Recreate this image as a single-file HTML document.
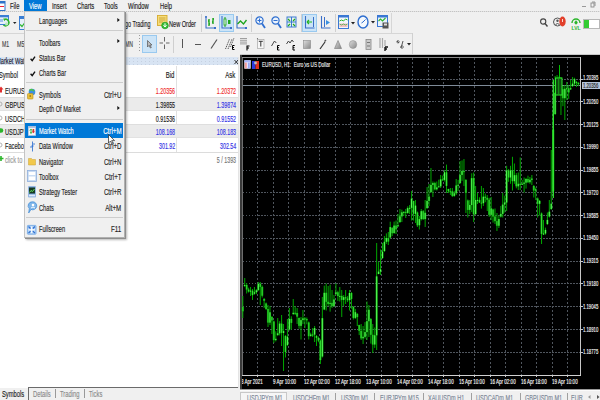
<!DOCTYPE html><html><head><meta charset="utf-8"><style>
*{margin:0;padding:0;box-sizing:border-box}
html,body{width:600px;height:400px;overflow:hidden;background:#f0f0f0;font-family:"Liberation Sans",sans-serif}
.b{position:absolute}
.t{position:absolute;white-space:nowrap;line-height:1;transform-origin:0 50%;-webkit-text-stroke:0.15px currentColor}
.t.r{transform-origin:100% 50%}
svg{position:absolute;overflow:visible}
</style></head><body>
<div class="b" style="left:0px;top:0px;width:600px;height:12px;background:#f0f0f0"></div><div class="b" style="left:0px;top:11.3px;width:600px;height:1px;background:repeating-linear-gradient(90deg,#c4c4c4 0 1px,#e2e2e2 1px 2px)"></div><svg style="left:0px;top:1px" width="6" height="10" viewBox="0 0 6 10"><rect x="-2" y="0.5" width="7" height="9" fill="#fff" stroke="#2f73c9"/><rect x="-2" y="0.5" width="7" height="2" fill="#2f73c9"/><rect x="0" y="5" width="4" height="1" fill="#e23"/></svg><span class="t" style="left:9.6px;top:1.6px;font-size:8.6px;color:#1a1a1a;transform:scaleX(0.68);">File</span><span class="t" style="left:52px;top:1.6px;font-size:8.6px;color:#1a1a1a;transform:scaleX(0.68);">Insert</span><span class="t" style="left:77px;top:1.6px;font-size:8.6px;color:#1a1a1a;transform:scaleX(0.68);">Charts</span><span class="t" style="left:104px;top:1.6px;font-size:8.6px;color:#1a1a1a;transform:scaleX(0.68);">Tools</span><span class="t" style="left:127.8px;top:1.6px;font-size:8.6px;color:#1a1a1a;transform:scaleX(0.68);">Window</span><span class="t" style="left:159.6px;top:1.6px;font-size:8.6px;color:#1a1a1a;transform:scaleX(0.68);">Help</span><div class="b" style="left:24px;top:0px;width:23px;height:11px;background:#0078d7"></div><span class="t" style="left:28.8px;top:1.6px;font-size:8.4px;color:#fff;transform:scaleX(0.7);">View</span><div class="b" style="left:582px;top:6px;width:4px;height:1px;background:#999"></div><svg style="left:590px;top:1px" width="6" height="7" viewBox="0 0 6 7"><rect x="1" y="2" width="3" height="4" fill="none" stroke="#8a8a8a" stroke-width="0.9"/><path d="M2 1h3v4" fill="none" stroke="#8a8a8a" stroke-width="0.9"/></svg><div class="b" style="left:0px;top:12.5px;width:600px;height:41px;background:#f0f0f0"></div><div class="b" style="left:0px;top:32.8px;width:413px;height:1px;background:#d6d6d6"></div><div class="b" style="left:0px;top:53.5px;width:600px;height:1px;background:#c9c9c9"></div><svg style="left:0px;top:15px" width="11" height="15" viewBox="0 0 11 15"><rect x="-1.5" y="0.5" width="10" height="9" fill="#e6effa" stroke="#3a7fd5"/><rect x="-1.5" y="0.5" width="10" height="1.8" fill="#3a7fd5"/><rect x="0" y="4" width="3" height="3" fill="#9cc0ec"/><path d="M4.2 4.5a3.3 3.3 0 1 1 -0.8 5.5" fill="none" stroke="#2db52d" stroke-width="1.5"/><path d="M3 3.5l2.5 0.5-1 2.2z" fill="#2db52d"/><circle cx="6.6" cy="8.8" r="1.6" fill="#bde6bd"/></svg><svg style="left:12.5px;top:22px" width="4" height="3" viewBox="0 0 4 3"><path d="M0 0h3.5l-1.75 2z" fill="#222"/></svg><svg style="left:19px;top:16px" width="6" height="14" viewBox="0 0 6 14"><rect x="0.5" y="0.5" width="6" height="13" fill="#e6effa" stroke="#3a7fd5"/><rect x="0.5" y="0.5" width="6" height="2.5" fill="#3a7fd5"/><path d="M1.2 8.5l1.8 2 2.5-3.5" stroke="#2db52d" fill="none" stroke-width="1.2"/></svg><span class="t" style="left:125.2px;top:19.6px;font-size:9px;color:#1a1a1a;transform:scaleX(0.6);">go Trading</span><svg style="left:157px;top:15px" width="11" height="15" viewBox="0 0 11 15"><rect x="0.5" y="0.5" width="9.5" height="10" fill="#f6dc7a" stroke="#d6ac30" stroke-width="0.9"/><path d="M2 3h6.5M2 5h6.5M2 7h4" stroke="#c49a2a" stroke-width="0.8"/><circle cx="8" cy="10.5" r="3.3" fill="#3cc03c" stroke="#1f9a1f" stroke-width="0.7"/><path d="M8 8.3v3.5M6.5 10.3l1.5 1.7 1.5-1.7" stroke="#fff" fill="none" stroke-width="1"/></svg><span class="t" style="left:168.8px;top:19.6px;font-size:9px;color:#1a1a1a;transform:scaleX(0.62);">New Order</span><div class="b" style="left:201px;top:14px;width:1px;height:18px;background:#cfcfcf"></div><div class="b" style="left:251px;top:14px;width:1px;height:18px;background:#cfcfcf"></div><div class="b" style="left:301px;top:14px;width:1px;height:18px;background:#cfcfcf"></div><div class="b" style="left:335px;top:14px;width:1px;height:18px;background:#cfcfcf"></div><div class="b" style="left:391px;top:13px;width:1px;height:20px;background:#d6d6d6"></div><svg style="left:205px;top:16px" width="11" height="13" viewBox="0 0 11 13"><path d="M1 0v12h10" stroke="#3a6fc8" fill="none" stroke-width="1.1"/><circle cx="1" cy="1" r="0.9" fill="#3a6fc8"/><rect x="9" y="11" width="2" height="2" fill="#3a6fc8"/><path d="M4 3v7M3 5h1M4 8h1M8 2v6M7 6h1M8 3h1" stroke="#1ea51e" stroke-width="1.4"/></svg><div class="b" style="left:219px;top:14px;width:15px;height:18px;background:#cce4f7;border:1px solid #99c9ef"></div><svg style="left:221px;top:16px" width="11" height="13" viewBox="0 0 11 13"><path d="M1 0v12h10" stroke="#3a6fc8" fill="none" stroke-width="1.1"/><rect x="9" y="11" width="2" height="2" fill="#3a6fc8"/><path d="M4 1v10" stroke="#1ea51e" stroke-width="1"/><rect x="3" y="3" width="2" height="6" fill="#e8f6e8" stroke="#1ea51e" stroke-width="0.8"/><rect x="7" y="4" width="2.5" height="4" fill="#1ea51e"/></svg><svg style="left:236px;top:16px" width="11" height="13" viewBox="0 0 11 13"><path d="M1 0v12h10" stroke="#3a6fc8" fill="none" stroke-width="1.1"/><rect x="9" y="11" width="2" height="2" fill="#3a6fc8"/><path d="M1.5 8l3-3 3 3 3-4" stroke="#1ea51e" fill="none" stroke-width="1.3"/></svg><svg style="left:255px;top:16px" width="11" height="13" viewBox="0 0 11 13"><circle cx="4.5" cy="4.5" r="3.6" fill="#eaf2fc" stroke="#2f6fd0" stroke-width="1.2"/><path d="M7 7.5l3 4.5" stroke="#2f6fd0" stroke-width="1.8"/><path d="M2.5 4.5h4" stroke="#2f6fd0" stroke-width="1"/><path d="M4.5 2.5v4" stroke="#2f6fd0" stroke-width="1"/></svg><svg style="left:271px;top:16px" width="11" height="13" viewBox="0 0 11 13"><circle cx="4.5" cy="4.5" r="3.6" fill="#eaf2fc" stroke="#2f6fd0" stroke-width="1.2"/><path d="M7 7.5l3 4.5" stroke="#2f6fd0" stroke-width="1.8"/><path d="M2.5 4.5h4" stroke="#2f6fd0" stroke-width="1"/></svg><svg style="left:286px;top:16px" width="11" height="12" viewBox="0 0 11 12"><rect x="0.5" y="0.5" width="10" height="11" fill="#3a78d4"/><rect x="1.5" y="1.5" width="3.5" height="4" fill="#e8f3e8"/><rect x="6" y="1.5" width="3.5" height="4" fill="#e8f3e8"/><rect x="1.5" y="6.5" width="3.5" height="4" fill="#e8f3e8"/><rect x="6" y="6.5" width="3.5" height="4" fill="#e8f3e8"/><path d="M2 3l2 2M9 3l-2 2M2 10l2-2M9 10l-2-2" stroke="#1ea51e" stroke-width="1.1"/></svg><div class="b" style="left:302px;top:14px;width:15px;height:18px;background:#cce4f7;border:1px solid #99c9ef"></div><svg style="left:304px;top:16px" width="11" height="13" viewBox="0 0 11 13"><path d="M1.5 0v12h9" stroke="#3a6fc8" fill="none" stroke-width="1.1"/><path d="M9.5 1v10" stroke="#3a6fc8" stroke-width="1"/><path d="M3 6h5M3 6l2-2M3 6l2 2" stroke="#25b525" stroke-width="1.2" fill="none"/></svg><svg style="left:320px;top:16px" width="11" height="13" viewBox="0 0 11 13"><path d="M1.5 0v12h9" stroke="#3a6fc8" fill="none" stroke-width="1.1"/><path d="M4.5 1v10" stroke="#3a6fc8" stroke-width="1"/><path d="M6 4l4 2.5-4 2.5z" fill="#3a8fe0"/></svg><svg style="left:338px;top:15px" width="11" height="14" viewBox="0 0 11 14"><rect x="0.5" y="0.5" width="10" height="13" fill="#f2f6fb" stroke="#3a78d4"/><rect x="0.5" y="0.5" width="10" height="2" fill="#3a78d4"/><path d="M1.5 6l2-1 2 1 2-2 2 1" stroke="#2db52d" fill="none" stroke-width="1"/><rect x="1.5" y="8.5" width="8" height="3.5" fill="#f0c0c0"/><path d="M1.5 9l2 1 2-1 2 1 2-1" stroke="#4cae4c" fill="none" stroke-width="0.8"/></svg><svg style="left:350.5px;top:21.5px" width="4" height="3" viewBox="0 0 4 3"><path d="M0 0h4l-2 2.5z" fill="#222"/></svg><svg style="left:357px;top:15px" width="12" height="14" viewBox="0 0 12 14"><ellipse cx="6" cy="7" rx="5" ry="6" fill="#f4f8fd" stroke="#2f6fd0" stroke-width="1.4"/><path d="M6 7l2.5-2.5M6 7l-1.5 1" stroke="#2f6fd0" stroke-width="1"/></svg><svg style="left:371px;top:21px" width="4" height="3" viewBox="0 0 4 3"><path d="M0 0h4l-2 2.5z" fill="#222"/></svg><svg style="left:377px;top:15px" width="12" height="15" viewBox="0 0 12 15"><rect x="0.5" y="0.5" width="10" height="11" fill="#e8f1fb" stroke="#3a78d4"/><rect x="0.5" y="0.5" width="10" height="2" fill="#3a78d4"/><path d="M1.5 6l2-2 2 2 3-3" stroke="#2db52d" fill="none" stroke-width="1.1"/><rect x="5.5" y="7.5" width="6" height="6" fill="#555"/><rect x="7" y="8.5" width="3" height="2" fill="#ddd"/></svg><svg style="left:540px;top:18px" width="8" height="10" viewBox="0 0 8 10"><circle cx="3.2" cy="3.5" r="2.6" fill="none" stroke="#444" stroke-width="1.1"/><path d="M5 5.5l2.5 3" stroke="#444" stroke-width="1.4"/></svg><svg style="left:553px;top:16px" width="14" height="12" viewBox="0 0 14 12"><circle cx="4.5" cy="6" r="4" fill="#f0f0f0" stroke="#555" stroke-width="1"/><circle cx="4.5" cy="4.8" r="1.2" fill="#555"/><path d="M2.5 8.5q2-2 4 0" stroke="#555" fill="none"/><ellipse cx="9.5" cy="5.5" rx="3.2" ry="5" fill="#e2402b"/><path d="M9.5 3v3" stroke="#fff" stroke-width="0.8"/></svg><svg style="left:570px;top:16px" width="12" height="15" viewBox="0 0 12 15"><path d="M2 7a4 4 0 0 1 8 0" stroke="#2bb52b" fill="none" stroke-width="1.4"/><circle cx="6" cy="6.5" r="1.6" fill="#2bb52b"/><path d="M6 4.5v4" stroke="#2bb52b" stroke-width="1"/><text x="6" y="13.5" font-size="5" fill="#2bb52b" text-anchor="middle" font-family="Liberation Sans" font-weight="bold">LVL</text></svg><div class="b" style="left:583px;top:19px;width:17px;height:10px;background:#fff;border:1px solid #b8b8b8"></div><div class="b" style="left:584px;top:20px;width:5px;height:8px;background:#33cc33"></div><span class="t" style="left:2px;top:39.9px;font-size:8.6px;color:#444;transform:scaleX(0.6);">M1</span><span class="t" style="left:16.5px;top:39.9px;font-size:8.6px;color:#444;transform:scaleX(0.62);">M5</span><span class="t" style="left:125px;top:39.9px;font-size:8.6px;color:#444;transform:scaleX(0.6);">MN</span><div class="b" style="left:139px;top:35px;width:1px;height:18px;background:repeating-linear-gradient(180deg,#9a9a9a 0 1px,transparent 1px 3px)"></div><div class="b" style="left:142px;top:35px;width:15px;height:18px;background:#cce4f7;border:1px solid #99c9ef"></div><svg style="left:146.5px;top:39.5px" width="5" height="9" viewBox="0 0 5 9"><path d="M0.5 0.5v6.5l1.6-1.6 1.3 2.6 0.9-0.4-1.3-2.6h2z" fill="#bbb" stroke="#555" stroke-width="0.7"/></svg><svg style="left:159px;top:37px" width="11" height="12" viewBox="0 0 11 12"><path d="M5.5 0v4.5M5.5 7.5v4.5M0.5 6h3.5M7 6h3.5" stroke="#666" stroke-width="1"/></svg><div class="b" style="left:173px;top:36px;width:1px;height:17px;background:#cfcfcf"></div><div class="b" style="left:181.5px;top:39px;width:1.2px;height:9px;background:#555"></div><div class="b" style="left:195px;top:43.5px;width:6px;height:1.3px;background:#555"></div><svg style="left:210px;top:39px" width="8" height="10" viewBox="0 0 8 10"><path d="M7 0.5l-6 9" stroke="#555" stroke-width="1.2"/></svg><svg style="left:225px;top:37px" width="11" height="14" viewBox="0 0 11 14"><path d="M0.5 12l4-10M3 12l4-10M5.5 10l3.5-9" stroke="#333" stroke-width="0.8" stroke-dasharray="1.3 0.7"/><path d="M9.5 8.5h-2v4h2M7.5 10.5h1.5" stroke="#000" stroke-width="1" fill="none"/></svg><svg style="left:240px;top:37px" width="10" height="14" viewBox="0 0 10 14"><path d="M0 1.5h7M0 3.3h7M0 5.1h7M0 6.9h7" stroke="#8a8a8a" stroke-width="0.8"/><path d="M9.5 9h-2.5v4.5M7 11h2" stroke="#000" stroke-width="1.1" fill="none"/></svg><svg style="left:256px;top:37px" width="9" height="13" viewBox="0 0 9 13"><circle cx="1.5" cy="1.5" r="0.6" fill="#666"/><rect x="1.5" y="2.5" width="6.5" height="9" fill="#f6f6f6" stroke="#999" stroke-width="0.6"/><path d="M2.8 4.3h4M4.8 4.3v5.2" stroke="#333" stroke-width="1"/></svg><svg style="left:271px;top:38px" width="10" height="13" viewBox="0 0 10 13"><path d="M0.5 8l3-5 1.8 2" stroke="#444" stroke-width="1" fill="none"/><path d="M8.5 7.5h-2v4.5h2M6.5 9.7h1.5" stroke="#000" stroke-width="1" fill="none"/></svg><svg style="left:286px;top:38px" width="10" height="13" viewBox="0 0 10 13"><path d="M0.5 6l2-3 1.5 2 2-3 1.5 2" stroke="#444" stroke-width="1" fill="none"/><path d="M9 7.5h-2v4.5h2M7 9.7h1.5" stroke="#000" stroke-width="1" fill="none"/></svg><svg style="left:303px;top:40px" width="8" height="9" viewBox="0 0 8 9"><defs><linearGradient id="g1" x1="0" y1="0" x2="1" y2="1"><stop offset="0" stop-color="#ddd"/><stop offset="1" stop-color="#888"/></linearGradient></defs><rect x="0.5" y="0.5" width="7" height="8" fill="url(#g1)" stroke="#888" stroke-width="0.6"/></svg><svg style="left:319px;top:39px" width="8" height="11" viewBox="0 0 8 11"><path d="M1 10l5-7" stroke="#333" stroke-width="1.2"/><path d="M5 2l1.5-1.5 1 1L6 3z" fill="#555"/></svg><svg style="left:334px;top:40px" width="8" height="9" viewBox="0 0 8 9"><path d="M4 0.5l3.5 8h-7z" fill="url(#g1)" stroke="#777" stroke-width="0.6"/></svg><svg style="left:349px;top:40px" width="8" height="9" viewBox="0 0 8 9"><ellipse cx="4" cy="4.5" rx="3.7" ry="4" fill="url(#g1)" stroke="#888" stroke-width="0.5"/></svg><svg style="left:365px;top:39px" width="7" height="11" viewBox="0 0 7 11"><rect x="1" y="0.5" width="5" height="10" fill="#ccc" stroke="#888" stroke-width="0.8"/><path d="M2 3.5h3M2 7h3" stroke="#777"/></svg><svg style="left:379px;top:38px" width="9" height="13" viewBox="0 0 9 13"><path d="M1 0v10M3.5 0v10M6 2v6" stroke="#aaa" stroke-width="1.2"/><path d="M6 9h3M6 9v4M6 11h2" stroke="#111" stroke-width="1.4"/></svg><svg style="left:396px;top:40px" width="8" height="9" viewBox="0 0 8 9"><path d="M1 1l2 2M5 8l2-7" stroke="#555" stroke-width="1"/><circle cx="2" cy="1.8" r="1.2" fill="none" stroke="#555" stroke-width="0.8"/><circle cx="6" cy="7" r="1.3" fill="none" stroke="#555" stroke-width="0.8"/></svg><svg style="left:407px;top:43px" width="4" height="3" viewBox="0 0 4 3"><path d="M0 0h4l-2 2.5z" fill="#222"/></svg><div class="b" style="left:412px;top:33px;width:1px;height:21px;background:#d0d0d0"></div><div class="b" style="left:0px;top:54px;width:240px;height:346px;background:#f0f0f0"></div><div class="b" style="left:0px;top:56.5px;width:238px;height:331px;background:#fff"></div><div class="b" style="left:0px;top:57px;width:238px;height:8.3px;background-color:#d8e4f3;background-image:radial-gradient(circle at 1.5px 1.5px,#c6d1e1 0.5px,transparent 0.8px);background-size:4px 3px;background-position:0 0"></div><span class="t" style="left:-4.5px;top:57.2px;font-size:8.4px;color:#1a1a30;transform:scaleX(0.68);">Market Watch</span><svg style="left:233.5px;top:58.5px" width="5" height="6" viewBox="0 0 5 6"><path d="M0.5 1l3.5 4M4 1l-3.5 4" stroke="#222" stroke-width="0.9"/></svg><div class="b" style="left:237.5px;top:56.5px;width:1px;height:331px;background:#e4e4e4"></div><span class="t" style="left:-1px;top:71.2px;font-size:8.6px;color:#222;transform:scaleX(0.66);">Symbol</span><span class="t r" style="right:425.6px;top:71.2px;font-size:8.6px;color:#222;transform:scaleX(0.7);">Bid</span><span class="t r" style="right:364.5px;top:71.2px;font-size:8.6px;color:#222;transform:scaleX(0.7);">Ask</span><div class="b" style="left:175.8px;top:66px;width:1px;height:86px;background:#e0e0e0"></div><div class="b" style="left:0px;top:151.8px;width:238px;height:1px;background:#dcdcdc"></div><svg style="left:-1px;top:86.0px" width="5" height="7" viewBox="0 0 5 7"><path d="M2 0.5l2.5 3h-1.5v3h-2v-3h-1.5z" fill="#e03030"/></svg><span class="t" style="left:5px;top:87.0px;font-size:8.6px;color:#222;transform:scaleX(0.66);">EURUS</span><span class="t r" style="right:424.7px;top:87.0px;font-size:8.6px;color:#f03030;transform:scaleX(0.62);">1.20356</span><span class="t r" style="right:363.5px;top:87.0px;font-size:8.6px;color:#f03030;transform:scaleX(0.62);">1.20372</span><div class="b" style="left:0px;top:96.75px;width:238px;height:13.75px;background:#ebebeb;border-top:1px solid #dedede;border-bottom:1px solid #e2e2e2"></div><svg style="left:-2px;top:100.75px" width="5" height="6" viewBox="0 0 5 6"><circle cx="2" cy="3" r="2" fill="none" stroke="#aaa" stroke-width="0.9"/></svg><span class="t" style="left:5px;top:100.75px;font-size:8.6px;color:#222;transform:scaleX(0.66);">GBPUS</span><span class="t r" style="right:424.7px;top:100.75px;font-size:8.6px;color:#222;transform:scaleX(0.62);">1.39855</span><span class="t r" style="right:363.5px;top:100.75px;font-size:8.6px;color:#3434e6;transform:scaleX(0.62);">1.39874</span><svg style="left:-2px;top:114.5px" width="5" height="6" viewBox="0 0 5 6"><circle cx="2" cy="3" r="2" fill="none" stroke="#aaa" stroke-width="0.9"/></svg><span class="t" style="left:5px;top:114.5px;font-size:8.6px;color:#222;transform:scaleX(0.66);">USDCH</span><span class="t r" style="right:424.7px;top:114.5px;font-size:8.6px;color:#222;transform:scaleX(0.62);">0.91536</span><span class="t r" style="right:363.5px;top:114.5px;font-size:8.6px;color:#3434e6;transform:scaleX(0.62);">0.91552</span><div class="b" style="left:0px;top:124.25px;width:238px;height:13.75px;background:#ebebeb;border-top:1px solid #dedede;border-bottom:1px solid #e2e2e2"></div><svg style="left:-1px;top:127.25px" width="5" height="7" viewBox="0 0 5 7"><circle cx="2" cy="3.5" r="2.3" fill="#2bb52b"/></svg><span class="t" style="left:5px;top:128.25px;font-size:8.6px;color:#222;transform:scaleX(0.66);">USDJPY</span><span class="t r" style="right:424.7px;top:128.25px;font-size:8.6px;color:#3434e6;transform:scaleX(0.62);">108.168</span><span class="t r" style="right:363.5px;top:128.25px;font-size:8.6px;color:#3434e6;transform:scaleX(0.62);">108.183</span><svg style="left:-2px;top:142.0px" width="5" height="6" viewBox="0 0 5 6"><circle cx="2" cy="3" r="2" fill="none" stroke="#aaa" stroke-width="0.9"/></svg><span class="t" style="left:5px;top:142.0px;font-size:8.6px;color:#222;transform:scaleX(0.66);">Facebo</span><span class="t r" style="right:424.7px;top:142.0px;font-size:8.6px;color:#3434e6;transform:scaleX(0.62);">301.92</span><span class="t r" style="right:363.5px;top:142.0px;font-size:8.6px;color:#3434e6;transform:scaleX(0.62);">302.54</span><svg style="left:-1px;top:154.75px" width="5" height="7" viewBox="0 0 5 7"><path d="M2 1v5M-0.5 3.5h5" stroke="#2bb52b" stroke-width="1.6"/></svg><span class="t" style="left:5px;top:155.75px;font-size:8.6px;color:#999;transform:scaleX(0.66);">click to add</span><span class="t r" style="right:363.5px;top:155.75px;font-size:8.6px;color:#777;transform:scaleX(0.62);">5 / 1393</span><div class="b" style="left:28px;top:387px;width:210px;height:1px;background:#6b6b6b"></div><div class="b" style="left:28px;top:387px;width:1px;height:13px;background:#6b6b6b"></div><div class="b" style="left:29px;top:388px;width:211px;height:12px;background:#f0f0f0"></div><span class="t" style="left:2px;top:390px;font-size:8.8px;color:#222;transform:scaleX(0.66);">Symbols</span><span class="t" style="left:33px;top:390px;font-size:8.8px;color:#8a8a8a;transform:scaleX(0.66);">Details</span><div class="b" style="left:55px;top:389px;width:0.8px;height:9px;background:#999"></div><span class="t" style="left:60px;top:390px;font-size:8.8px;color:#8a8a8a;transform:scaleX(0.66);">Trading</span><div class="b" style="left:84px;top:389px;width:0.8px;height:9px;background:#999"></div><span class="t" style="left:89px;top:390px;font-size:8.8px;color:#8a8a8a;transform:scaleX(0.66);">Ticks</span><div class="b" style="left:240px;top:55px;width:360px;height:335px;background:#000"></div><div class="b" style="left:243px;top:78.5px;width:337px;height:1px;background:repeating-linear-gradient(90deg,#50565e 0 1.5px,transparent 1.5px 3px)"></div><div class="b" style="left:580px;top:78.5px;width:3px;height:1px;background:#c8c8c8"></div><span class="t" style="left:583px;top:74.1px;font-size:7.8px;color:#fff;transform:scaleX(0.54);">1.20395</span><div class="b" style="left:243px;top:101.27px;width:337px;height:1px;background:repeating-linear-gradient(90deg,#50565e 0 1.5px,transparent 1.5px 3px)"></div><div class="b" style="left:580px;top:101.27px;width:3px;height:1px;background:#c8c8c8"></div><span class="t" style="left:583px;top:97.86999999999999px;font-size:7.8px;color:#fff;transform:scaleX(0.54);">1.20260</span><div class="b" style="left:243px;top:124.03999999999999px;width:337px;height:1px;background:repeating-linear-gradient(90deg,#50565e 0 1.5px,transparent 1.5px 3px)"></div><div class="b" style="left:580px;top:124.03999999999999px;width:3px;height:1px;background:#c8c8c8"></div><span class="t" style="left:583px;top:120.63999999999999px;font-size:7.8px;color:#fff;transform:scaleX(0.54);">1.20125</span><div class="b" style="left:243px;top:146.81px;width:337px;height:1px;background:repeating-linear-gradient(90deg,#50565e 0 1.5px,transparent 1.5px 3px)"></div><div class="b" style="left:580px;top:146.81px;width:3px;height:1px;background:#c8c8c8"></div><span class="t" style="left:583px;top:143.41px;font-size:7.8px;color:#fff;transform:scaleX(0.54);">1.19990</span><div class="b" style="left:243px;top:169.57999999999998px;width:337px;height:1px;background:repeating-linear-gradient(90deg,#50565e 0 1.5px,transparent 1.5px 3px)"></div><div class="b" style="left:580px;top:169.57999999999998px;width:3px;height:1px;background:#c8c8c8"></div><span class="t" style="left:583px;top:166.17999999999998px;font-size:7.8px;color:#fff;transform:scaleX(0.54);">1.19855</span><div class="b" style="left:243px;top:192.35px;width:337px;height:1px;background:repeating-linear-gradient(90deg,#50565e 0 1.5px,transparent 1.5px 3px)"></div><div class="b" style="left:580px;top:192.35px;width:3px;height:1px;background:#c8c8c8"></div><span class="t" style="left:583px;top:188.95px;font-size:7.8px;color:#fff;transform:scaleX(0.54);">1.19720</span><div class="b" style="left:243px;top:215.12px;width:337px;height:1px;background:repeating-linear-gradient(90deg,#50565e 0 1.5px,transparent 1.5px 3px)"></div><div class="b" style="left:580px;top:215.12px;width:3px;height:1px;background:#c8c8c8"></div><span class="t" style="left:583px;top:211.72px;font-size:7.8px;color:#fff;transform:scaleX(0.54);">1.19585</span><div class="b" style="left:243px;top:237.89px;width:337px;height:1px;background:repeating-linear-gradient(90deg,#50565e 0 1.5px,transparent 1.5px 3px)"></div><div class="b" style="left:580px;top:237.89px;width:3px;height:1px;background:#c8c8c8"></div><span class="t" style="left:583px;top:234.48999999999998px;font-size:7.8px;color:#fff;transform:scaleX(0.54);">1.19450</span><div class="b" style="left:243px;top:260.65999999999997px;width:337px;height:1px;background:repeating-linear-gradient(90deg,#50565e 0 1.5px,transparent 1.5px 3px)"></div><div class="b" style="left:580px;top:260.65999999999997px;width:3px;height:1px;background:#c8c8c8"></div><span class="t" style="left:583px;top:257.26px;font-size:7.8px;color:#fff;transform:scaleX(0.54);">1.19315</span><div class="b" style="left:243px;top:283.43px;width:337px;height:1px;background:repeating-linear-gradient(90deg,#50565e 0 1.5px,transparent 1.5px 3px)"></div><div class="b" style="left:580px;top:283.43px;width:3px;height:1px;background:#c8c8c8"></div><span class="t" style="left:583px;top:280.03000000000003px;font-size:7.8px;color:#fff;transform:scaleX(0.54);">1.19180</span><div class="b" style="left:243px;top:306.2px;width:337px;height:1px;background:repeating-linear-gradient(90deg,#50565e 0 1.5px,transparent 1.5px 3px)"></div><div class="b" style="left:580px;top:306.2px;width:3px;height:1px;background:#c8c8c8"></div><span class="t" style="left:583px;top:302.8px;font-size:7.8px;color:#fff;transform:scaleX(0.54);">1.19045</span><div class="b" style="left:243px;top:328.97px;width:337px;height:1px;background:repeating-linear-gradient(90deg,#50565e 0 1.5px,transparent 1.5px 3px)"></div><div class="b" style="left:580px;top:328.97px;width:3px;height:1px;background:#c8c8c8"></div><span class="t" style="left:583px;top:325.57000000000005px;font-size:7.8px;color:#fff;transform:scaleX(0.54);">1.18910</span><div class="b" style="left:243px;top:351.74px;width:337px;height:1px;background:repeating-linear-gradient(90deg,#50565e 0 1.5px,transparent 1.5px 3px)"></div><div class="b" style="left:580px;top:351.74px;width:3px;height:1px;background:#c8c8c8"></div><span class="t" style="left:583px;top:348.34000000000003px;font-size:7.8px;color:#fff;transform:scaleX(0.54);">1.18775</span><div class="b" style="left:257.0px;top:58px;width:1px;height:317px;background:repeating-linear-gradient(180deg,#50565e 0 2px,transparent 2px 4px)"></div><div class="b" style="left:257.0px;top:375px;width:1px;height:1.5px;background:#c8c8c8"></div><div class="b" style="left:272.5px;top:58px;width:1px;height:317px;background:repeating-linear-gradient(180deg,#50565e 0 2px,transparent 2px 4px)"></div><div class="b" style="left:272.5px;top:375px;width:1px;height:2px;background:#c8c8c8"></div><div class="b" style="left:288.0px;top:58px;width:1px;height:317px;background:repeating-linear-gradient(180deg,#50565e 0 2px,transparent 2px 4px)"></div><div class="b" style="left:288.0px;top:375px;width:1px;height:1.5px;background:#c8c8c8"></div><div class="b" style="left:303.5px;top:58px;width:1px;height:317px;background:repeating-linear-gradient(180deg,#50565e 0 2px,transparent 2px 4px)"></div><div class="b" style="left:303.5px;top:375px;width:1px;height:2px;background:#c8c8c8"></div><div class="b" style="left:319.0px;top:58px;width:1px;height:317px;background:repeating-linear-gradient(180deg,#50565e 0 2px,transparent 2px 4px)"></div><div class="b" style="left:319.0px;top:375px;width:1px;height:1.5px;background:#c8c8c8"></div><div class="b" style="left:334.5px;top:58px;width:1px;height:317px;background:repeating-linear-gradient(180deg,#50565e 0 2px,transparent 2px 4px)"></div><div class="b" style="left:334.5px;top:375px;width:1px;height:2px;background:#c8c8c8"></div><div class="b" style="left:350.0px;top:58px;width:1px;height:317px;background:repeating-linear-gradient(180deg,#50565e 0 2px,transparent 2px 4px)"></div><div class="b" style="left:350.0px;top:375px;width:1px;height:1.5px;background:#c8c8c8"></div><div class="b" style="left:365.5px;top:58px;width:1px;height:317px;background:repeating-linear-gradient(180deg,#50565e 0 2px,transparent 2px 4px)"></div><div class="b" style="left:365.5px;top:375px;width:1px;height:2px;background:#c8c8c8"></div><div class="b" style="left:381.0px;top:58px;width:1px;height:317px;background:repeating-linear-gradient(180deg,#50565e 0 2px,transparent 2px 4px)"></div><div class="b" style="left:381.0px;top:375px;width:1px;height:1.5px;background:#c8c8c8"></div><div class="b" style="left:396.5px;top:58px;width:1px;height:317px;background:repeating-linear-gradient(180deg,#50565e 0 2px,transparent 2px 4px)"></div><div class="b" style="left:396.5px;top:375px;width:1px;height:2px;background:#c8c8c8"></div><div class="b" style="left:412.0px;top:58px;width:1px;height:317px;background:repeating-linear-gradient(180deg,#50565e 0 2px,transparent 2px 4px)"></div><div class="b" style="left:412.0px;top:375px;width:1px;height:1.5px;background:#c8c8c8"></div><div class="b" style="left:427.5px;top:58px;width:1px;height:317px;background:repeating-linear-gradient(180deg,#50565e 0 2px,transparent 2px 4px)"></div><div class="b" style="left:427.5px;top:375px;width:1px;height:2px;background:#c8c8c8"></div><div class="b" style="left:443.0px;top:58px;width:1px;height:317px;background:repeating-linear-gradient(180deg,#50565e 0 2px,transparent 2px 4px)"></div><div class="b" style="left:443.0px;top:375px;width:1px;height:1.5px;background:#c8c8c8"></div><div class="b" style="left:458.5px;top:58px;width:1px;height:317px;background:repeating-linear-gradient(180deg,#50565e 0 2px,transparent 2px 4px)"></div><div class="b" style="left:458.5px;top:375px;width:1px;height:2px;background:#c8c8c8"></div><div class="b" style="left:474.0px;top:58px;width:1px;height:317px;background:repeating-linear-gradient(180deg,#50565e 0 2px,transparent 2px 4px)"></div><div class="b" style="left:474.0px;top:375px;width:1px;height:1.5px;background:#c8c8c8"></div><div class="b" style="left:489.5px;top:58px;width:1px;height:317px;background:repeating-linear-gradient(180deg,#50565e 0 2px,transparent 2px 4px)"></div><div class="b" style="left:489.5px;top:375px;width:1px;height:2px;background:#c8c8c8"></div><div class="b" style="left:505.0px;top:58px;width:1px;height:317px;background:repeating-linear-gradient(180deg,#50565e 0 2px,transparent 2px 4px)"></div><div class="b" style="left:505.0px;top:375px;width:1px;height:1.5px;background:#c8c8c8"></div><div class="b" style="left:520.5px;top:58px;width:1px;height:317px;background:repeating-linear-gradient(180deg,#50565e 0 2px,transparent 2px 4px)"></div><div class="b" style="left:520.5px;top:375px;width:1px;height:2px;background:#c8c8c8"></div><div class="b" style="left:536.0px;top:58px;width:1px;height:317px;background:repeating-linear-gradient(180deg,#50565e 0 2px,transparent 2px 4px)"></div><div class="b" style="left:536.0px;top:375px;width:1px;height:1.5px;background:#c8c8c8"></div><div class="b" style="left:551.5px;top:58px;width:1px;height:317px;background:repeating-linear-gradient(180deg,#50565e 0 2px,transparent 2px 4px)"></div><div class="b" style="left:551.5px;top:375px;width:1px;height:2px;background:#c8c8c8"></div><div class="b" style="left:567.0px;top:58px;width:1px;height:317px;background:repeating-linear-gradient(180deg,#50565e 0 2px,transparent 2px 4px)"></div><div class="b" style="left:567.0px;top:375px;width:1px;height:1.5px;background:#c8c8c8"></div><span class="t" style="left:241px;top:377.8px;font-size:7.8px;color:#fff;transform:scaleX(0.58);">8 Apr 2021</span><span class="t" style="left:273px;top:377.8px;font-size:7.8px;color:#fff;transform:scaleX(0.58);">9 Apr 10:00</span><span class="t" style="left:304px;top:377.8px;font-size:7.8px;color:#fff;transform:scaleX(0.58);">12 Apr 02:00</span><span class="t" style="left:335px;top:377.8px;font-size:7.8px;color:#fff;transform:scaleX(0.58);">12 Apr 18:00</span><span class="t" style="left:366px;top:377.8px;font-size:7.8px;color:#fff;transform:scaleX(0.58);">13 Apr 10:00</span><span class="t" style="left:397px;top:377.8px;font-size:7.8px;color:#fff;transform:scaleX(0.58);">14 Apr 02:00</span><span class="t" style="left:428px;top:377.8px;font-size:7.8px;color:#fff;transform:scaleX(0.58);">14 Apr 18:00</span><span class="t" style="left:459px;top:377.8px;font-size:7.8px;color:#fff;transform:scaleX(0.58);">15 Apr 10:00</span><span class="t" style="left:490px;top:377.8px;font-size:7.8px;color:#fff;transform:scaleX(0.58);">16 Apr 02:00</span><span class="t" style="left:521px;top:377.8px;font-size:7.8px;color:#fff;transform:scaleX(0.58);">16 Apr 18:00</span><span class="t" style="left:552px;top:377.8px;font-size:7.8px;color:#fff;transform:scaleX(0.58);">19 Apr 10:00</span><div class="b" style="left:240px;top:55px;width:2px;height:334px;background:#3a3a3a"></div><div class="b" style="left:242px;top:57px;width:1px;height:318.5px;background:#6e6e6e"></div><div class="b" style="left:242px;top:57px;width:338.5px;height:1px;background:#8a8a8a"></div><div class="b" style="left:580px;top:57px;width:1px;height:319px;background:#c8c8c8"></div><div class="b" style="left:242px;top:375px;width:339px;height:1px;background:#d0d0d0"></div><div class="b" style="left:243px;top:85px;width:337px;height:1px;background:#7f8b98"></div><div class="b" style="left:582px;top:82px;width:18px;height:7px;background:#b4c4d8"></div><span class="t" style="left:583px;top:81.6px;font-size:7.8px;color:#222;transform:scaleX(0.54);">1.20356</span><svg style="left:0px;top:0px" width="600" height="400" viewBox="0 0 600 400"><path d="M242.80 296.0V318.0" stroke="#00a800" stroke-width="1"/><rect x="241.70" y="307.0" width="2.2" height="4.3" fill="#0a900a"/><path d="M242.80 307.0V311.3" stroke="#33e033" stroke-width="1"/><path d="M244.74 278.0V287.0" stroke="#00a800" stroke-width="1"/><rect x="243.64" y="285.0" width="2.2" height="1.0" fill="#0a900a"/><path d="M244.74 285.0V286.0" stroke="#5cff5c" stroke-width="1"/><path d="M246.68 283.0V293.5" stroke="#00a800" stroke-width="1"/><rect x="245.58" y="285.0" width="2.2" height="4.6" fill="#0a900a"/><path d="M246.68 285.0V289.5" stroke="#33e033" stroke-width="1"/><path d="M248.62 287.7V292.6" stroke="#00a800" stroke-width="1"/><rect x="247.52" y="289.5" width="2.2" height="2.1" fill="#0a900a"/><path d="M248.62 289.5V291.6" stroke="#33e033" stroke-width="1"/><path d="M250.56 287.0V296.0" stroke="#00a800" stroke-width="1"/><rect x="249.46" y="290.6" width="2.2" height="1.0" fill="#0a900a"/><path d="M250.56 290.6V291.6" stroke="#5cff5c" stroke-width="1"/><path d="M252.50 289.0V300.0" stroke="#00a800" stroke-width="1"/><rect x="251.40" y="290.6" width="2.2" height="4.5" fill="#0a900a"/><path d="M252.50 290.6V295.2" stroke="#33e033" stroke-width="1"/><path d="M254.44 287.0V294.7" stroke="#00a800" stroke-width="1"/><rect x="253.34" y="292.3" width="2.2" height="1.4" fill="#0a900a"/><path d="M254.44 292.3V293.7" stroke="#5cff5c" stroke-width="1"/><path d="M256.38 289.2V294.2" stroke="#00a800" stroke-width="1"/><rect x="255.28" y="290.3" width="2.2" height="2.0" fill="#0a900a"/><path d="M256.38 290.3V292.3" stroke="#5cff5c" stroke-width="1"/><path d="M258.32 282.0V291.0" stroke="#00a800" stroke-width="1"/><rect x="257.22" y="284.0" width="2.2" height="6.0" fill="#0a900a"/><path d="M258.32 284.0V290.0" stroke="#5cff5c" stroke-width="1"/><path d="M260.26 282.0V305.0" stroke="#00a800" stroke-width="1"/><rect x="259.16" y="284.0" width="2.2" height="2.8" fill="#0a900a"/><path d="M260.26 284.0V286.9" stroke="#33e033" stroke-width="1"/><path d="M262.20 285.5V297.5" stroke="#00a800" stroke-width="1"/><rect x="261.10" y="286.9" width="2.2" height="8.8" fill="#0a900a"/><path d="M262.20 286.9V295.7" stroke="#33e033" stroke-width="1"/><path d="M264.14 298.0V308.0" stroke="#00a800" stroke-width="1"/><rect x="263.04" y="299.0" width="2.2" height="1.7" fill="#0a900a"/><path d="M264.14 299.0V300.7" stroke="#33e033" stroke-width="1"/><path d="M266.08 302.5V310.0" stroke="#00a800" stroke-width="1"/><rect x="264.98" y="303.5" width="2.2" height="5.5" fill="#0a900a"/><path d="M266.08 303.5V309.0" stroke="#33e033" stroke-width="1"/><path d="M268.02 305.0V327.0" stroke="#00a800" stroke-width="1"/><rect x="266.92" y="309.0" width="2.2" height="13.5" fill="#0a900a"/><path d="M268.02 309.0V322.6" stroke="#33e033" stroke-width="1"/><path d="M269.96 305.9V325.1" stroke="#00a800" stroke-width="1"/><rect x="268.86" y="312.3" width="2.2" height="10.3" fill="#0a900a"/><path d="M269.96 312.3V322.6" stroke="#5cff5c" stroke-width="1"/><path d="M271.90 316.0V334.0" stroke="#00a800" stroke-width="1"/><rect x="270.80" y="317.0" width="2.2" height="3.4" fill="#0a900a"/><path d="M271.90 317.0V320.4" stroke="#33e033" stroke-width="1"/><path d="M273.84 320.5V343.0" stroke="#00a800" stroke-width="1"/><rect x="272.74" y="321.5" width="2.2" height="18.6" fill="#0a900a"/><path d="M273.84 321.5V340.1" stroke="#33e033" stroke-width="1"/><path d="M275.78 331.3V341.4" stroke="#00a800" stroke-width="1"/><rect x="274.68" y="338.8" width="2.2" height="1.3" fill="#0a900a"/><path d="M275.78 338.8V340.1" stroke="#5cff5c" stroke-width="1"/><path d="M277.72 318.0V336.0" stroke="#00a800" stroke-width="1"/><rect x="276.62" y="333.3" width="2.2" height="1.7" fill="#0a900a"/><path d="M277.72 333.3V335.0" stroke="#5cff5c" stroke-width="1"/><path d="M279.66 321.2V335.4" stroke="#00a800" stroke-width="1"/><rect x="278.56" y="323.6" width="2.2" height="9.7" fill="#0a900a"/><path d="M279.66 323.6V333.3" stroke="#5cff5c" stroke-width="1"/><path d="M281.60 315.0V346.0" stroke="#00a800" stroke-width="1"/><rect x="280.50" y="323.6" width="2.2" height="9.3" fill="#0a900a"/><path d="M281.60 323.6V332.9" stroke="#33e033" stroke-width="1"/><path d="M283.54 324.0V371.0" stroke="#00a800" stroke-width="1"/><rect x="282.44" y="331.2" width="2.2" height="1.7" fill="#0a900a"/><path d="M283.54 331.2V332.9" stroke="#5cff5c" stroke-width="1"/><path d="M285.48 335.0V357.5" stroke="#00a800" stroke-width="1"/><rect x="284.38" y="336.0" width="2.2" height="16.0" fill="#0a900a"/><path d="M285.48 336.0V352.0" stroke="#33e033" stroke-width="1"/><path d="M287.42 319.0V346.0" stroke="#00a800" stroke-width="1"/><rect x="286.32" y="336.7" width="2.2" height="8.3" fill="#0a900a"/><path d="M287.42 336.7V345.0" stroke="#5cff5c" stroke-width="1"/><path d="M289.36 308.0V330.5" stroke="#00a800" stroke-width="1"/><rect x="288.26" y="318.9" width="2.2" height="10.6" fill="#0a900a"/><path d="M289.36 318.9V329.5" stroke="#5cff5c" stroke-width="1"/><path d="M291.30 316.3V329.6" stroke="#00a800" stroke-width="1"/><rect x="290.20" y="318.9" width="2.2" height="4.0" fill="#0a900a"/><path d="M291.30 318.9V322.9" stroke="#33e033" stroke-width="1"/><path d="M293.24 299.0V315.0" stroke="#00a800" stroke-width="1"/><rect x="292.14" y="312.8" width="2.2" height="1.2" fill="#0a900a"/><path d="M293.24 312.8V314.0" stroke="#5cff5c" stroke-width="1"/><path d="M295.18 306.0V315.0" stroke="#00a800" stroke-width="1"/><rect x="294.08" y="312.8" width="2.2" height="1.0" fill="#0a900a"/><path d="M295.18 312.8V313.8" stroke="#33e033" stroke-width="1"/><path d="M297.12 308.0V324.0" stroke="#00a800" stroke-width="1"/><rect x="296.02" y="313.0" width="2.2" height="3.6" fill="#0a900a"/><path d="M297.12 313.0V316.6" stroke="#33e033" stroke-width="1"/><path d="M299.06 317.4V328.7" stroke="#00a800" stroke-width="1"/><rect x="297.96" y="318.0" width="2.2" height="7.8" fill="#0a900a"/><path d="M299.06 318.0V325.8" stroke="#33e033" stroke-width="1"/><path d="M301.00 317.0V339.5" stroke="#00a800" stroke-width="1"/><rect x="299.90" y="320.1" width="2.2" height="5.8" fill="#0a900a"/><path d="M301.00 320.1V325.8" stroke="#5cff5c" stroke-width="1"/><path d="M302.94 310.0V324.0" stroke="#00a800" stroke-width="1"/><rect x="301.84" y="318.4" width="2.2" height="1.7" fill="#0a900a"/><path d="M302.94 318.4V320.1" stroke="#5cff5c" stroke-width="1"/><path d="M304.88 317.0V328.0" stroke="#00a800" stroke-width="1"/><rect x="303.78" y="318.4" width="2.2" height="1.0" fill="#0a900a"/><path d="M304.88 318.4V319.4" stroke="#33e033" stroke-width="1"/><path d="M306.82 317.5V324.3" stroke="#00a800" stroke-width="1"/><rect x="305.72" y="319.1" width="2.2" height="1.1" fill="#0a900a"/><path d="M306.82 319.1V320.3" stroke="#33e033" stroke-width="1"/><path d="M308.76 321.5V339.5" stroke="#00a800" stroke-width="1"/><rect x="307.66" y="322.5" width="2.2" height="13.7" fill="#0a900a"/><path d="M308.76 322.5V336.2" stroke="#33e033" stroke-width="1"/><path d="M310.70 332.7V336.7" stroke="#00a800" stroke-width="1"/><rect x="309.60" y="334.5" width="2.2" height="1.5" fill="#0a900a"/><path d="M310.70 334.5V336.0" stroke="#5cff5c" stroke-width="1"/><path d="M312.64 328.0V337.0" stroke="#00a800" stroke-width="1"/><rect x="311.54" y="334.5" width="2.2" height="1.0" fill="#0a900a"/><path d="M312.64 334.5V335.5" stroke="#33e033" stroke-width="1"/><path d="M314.58 326.0V342.0" stroke="#00a800" stroke-width="1"/><rect x="313.48" y="328.1" width="2.2" height="6.6" fill="#0a900a"/><path d="M314.58 328.1V334.6" stroke="#5cff5c" stroke-width="1"/><path d="M316.52 335.0V346.0" stroke="#00a800" stroke-width="1"/><rect x="315.42" y="336.0" width="2.2" height="1.9" fill="#0a900a"/><path d="M316.52 336.0V337.9" stroke="#33e033" stroke-width="1"/><path d="M318.46 336.6V342.2" stroke="#00a800" stroke-width="1"/><rect x="317.36" y="337.9" width="2.2" height="2.7" fill="#0a900a"/><path d="M318.46 337.9V340.6" stroke="#33e033" stroke-width="1"/><path d="M320.40 339.5V364.0" stroke="#00a800" stroke-width="1"/><rect x="319.30" y="340.6" width="2.2" height="19.5" fill="#0a900a"/><path d="M320.40 340.6V360.1" stroke="#33e033" stroke-width="1"/><path d="M322.34 297.0V357.5" stroke="#00a800" stroke-width="1"/><rect x="321.24" y="318.2" width="2.2" height="38.3" fill="#0a900a"/><path d="M322.34 318.2V356.5" stroke="#5cff5c" stroke-width="1"/><path d="M324.28 285.7V310.1" stroke="#00a800" stroke-width="1"/><rect x="323.18" y="292.8" width="2.2" height="16.7" fill="#0a900a"/><path d="M324.28 292.8V309.5" stroke="#5cff5c" stroke-width="1"/><path d="M326.22 283.5V310.5" stroke="#00a800" stroke-width="1"/><rect x="325.12" y="292.8" width="2.2" height="9.0" fill="#0a900a"/><path d="M326.22 292.8V301.8" stroke="#33e033" stroke-width="1"/><path d="M328.16 286.0V306.0" stroke="#00a800" stroke-width="1"/><rect x="327.06" y="301.8" width="2.2" height="2.2" fill="#0a900a"/><path d="M328.16 301.8V303.9" stroke="#33e033" stroke-width="1"/><path d="M330.10 284.6V311.7" stroke="#00a800" stroke-width="1"/><rect x="329.00" y="302.9" width="2.2" height="1.0" fill="#0a900a"/><path d="M330.10 302.9V303.9" stroke="#5cff5c" stroke-width="1"/><path d="M332.04 290.0V308.0" stroke="#00a800" stroke-width="1"/><rect x="330.94" y="302.9" width="2.2" height="3.1" fill="#0a900a"/><path d="M332.04 302.9V306.0" stroke="#33e033" stroke-width="1"/><path d="M333.98 294.9V306.7" stroke="#00a800" stroke-width="1"/><rect x="332.88" y="299.5" width="2.2" height="6.5" fill="#0a900a"/><path d="M333.98 299.5V306.0" stroke="#5cff5c" stroke-width="1"/><path d="M335.92 283.5V295.0" stroke="#00a800" stroke-width="1"/><rect x="334.82" y="292.3" width="2.2" height="1.7" fill="#0a900a"/><path d="M335.92 292.3V294.0" stroke="#5cff5c" stroke-width="1"/><path d="M337.86 290.7V300.9" stroke="#00a800" stroke-width="1"/><rect x="336.76" y="292.3" width="2.2" height="3.7" fill="#0a900a"/><path d="M337.86 292.3V296.0" stroke="#33e033" stroke-width="1"/><path d="M339.80 287.0V301.5" stroke="#00a800" stroke-width="1"/><rect x="338.70" y="295.9" width="2.2" height="1.0" fill="#0a900a"/><path d="M339.80 295.9V296.9" stroke="#5cff5c" stroke-width="1"/><path d="M341.74 290.0V317.0" stroke="#00a800" stroke-width="1"/><rect x="340.64" y="295.9" width="2.2" height="4.1" fill="#0a900a"/><path d="M341.74 295.9V299.9" stroke="#33e033" stroke-width="1"/><path d="M343.68 295.0V306.0" stroke="#00a800" stroke-width="1"/><rect x="342.58" y="297.2" width="2.2" height="2.7" fill="#0a900a"/><path d="M343.68 297.2V299.9" stroke="#5cff5c" stroke-width="1"/><path d="M345.62 290.0V304.0" stroke="#00a800" stroke-width="1"/><rect x="344.52" y="297.2" width="2.2" height="1.2" fill="#0a900a"/><path d="M345.62 297.2V298.5" stroke="#33e033" stroke-width="1"/><path d="M347.56 296.1V302.1" stroke="#00a800" stroke-width="1"/><rect x="346.46" y="298.5" width="2.2" height="1.8" fill="#0a900a"/><path d="M347.56 298.5V300.2" stroke="#33e033" stroke-width="1"/><path d="M349.50 290.0V310.5" stroke="#00a800" stroke-width="1"/><rect x="348.40" y="293.0" width="2.2" height="7.2" fill="#0a900a"/><path d="M349.50 293.0V300.2" stroke="#5cff5c" stroke-width="1"/><path d="M351.44 292.1V308.7" stroke="#00a800" stroke-width="1"/><rect x="350.34" y="293.0" width="2.2" height="5.9" fill="#0a900a"/><path d="M351.44 293.0V298.9" stroke="#33e033" stroke-width="1"/><path d="M353.38 306.0V319.5" stroke="#00a800" stroke-width="1"/><rect x="352.28" y="307.0" width="2.2" height="10.9" fill="#0a900a"/><path d="M353.38 307.0V317.9" stroke="#33e033" stroke-width="1"/><path d="M355.32 308.9V319.0" stroke="#00a800" stroke-width="1"/><rect x="354.22" y="312.2" width="2.2" height="5.6" fill="#0a900a"/><path d="M355.32 312.2V317.9" stroke="#5cff5c" stroke-width="1"/><path d="M357.26 313.0V326.0" stroke="#00a800" stroke-width="1"/><rect x="356.16" y="314.0" width="2.2" height="3.1" fill="#0a900a"/><path d="M357.26 314.0V317.1" stroke="#33e033" stroke-width="1"/><path d="M359.20 324.7V335.1" stroke="#00a800" stroke-width="1"/><rect x="358.10" y="325.0" width="2.2" height="5.8" fill="#0a900a"/><path d="M359.20 325.0V330.8" stroke="#33e033" stroke-width="1"/><path d="M361.14 324.0V340.0" stroke="#00a800" stroke-width="1"/><rect x="360.04" y="330.8" width="2.2" height="7.5" fill="#0a900a"/><path d="M361.14 330.8V338.3" stroke="#33e033" stroke-width="1"/><path d="M363.08 326.0V344.0" stroke="#00a800" stroke-width="1"/><rect x="361.98" y="336.8" width="2.2" height="1.4" fill="#0a900a"/><path d="M363.08 336.8V338.3" stroke="#5cff5c" stroke-width="1"/><path d="M365.02 322.1V338.6" stroke="#00a800" stroke-width="1"/><rect x="363.92" y="332.1" width="2.2" height="4.8" fill="#0a900a"/><path d="M365.02 332.1V336.8" stroke="#5cff5c" stroke-width="1"/><path d="M366.96 301.5V340.0" stroke="#00a800" stroke-width="1"/><rect x="365.86" y="321.2" width="2.2" height="10.9" fill="#0a900a"/><path d="M366.96 321.2V332.1" stroke="#5cff5c" stroke-width="1"/><path d="M368.90 305.0V337.0" stroke="#00a800" stroke-width="1"/><rect x="367.80" y="309.8" width="2.2" height="11.4" fill="#0a900a"/><path d="M368.90 309.8V321.2" stroke="#5cff5c" stroke-width="1"/><path d="M370.84 318.0V343.6" stroke="#00a800" stroke-width="1"/><rect x="369.74" y="319.0" width="2.2" height="15.8" fill="#0a900a"/><path d="M370.84 319.0V334.8" stroke="#33e033" stroke-width="1"/><path d="M372.78 324.0V353.0" stroke="#00a800" stroke-width="1"/><rect x="371.68" y="334.8" width="2.2" height="9.7" fill="#0a900a"/><path d="M372.78 334.8V344.5" stroke="#33e033" stroke-width="1"/><path d="M374.72 327.5V347.9" stroke="#00a800" stroke-width="1"/><rect x="373.62" y="335.3" width="2.2" height="9.2" fill="#0a900a"/><path d="M374.72 335.3V344.5" stroke="#5cff5c" stroke-width="1"/><path d="M376.66 243.0V350.0" stroke="#00a800" stroke-width="1"/><rect x="375.56" y="276.4" width="2.2" height="59.0" fill="#0a900a"/><path d="M376.66 276.4V335.3" stroke="#5cff5c" stroke-width="1"/><path d="M378.60 261.9V274.3" stroke="#00a800" stroke-width="1"/><rect x="377.50" y="271.6" width="2.2" height="2.4" fill="#0a900a"/><path d="M378.60 271.6V274.0" stroke="#5cff5c" stroke-width="1"/><path d="M380.54 249.5V275.0" stroke="#00a800" stroke-width="1"/><rect x="379.44" y="269.4" width="2.2" height="2.1" fill="#0a900a"/><path d="M380.54 269.4V271.6" stroke="#5cff5c" stroke-width="1"/><path d="M382.48 243.0V259.0" stroke="#00a800" stroke-width="1"/><rect x="381.38" y="251.6" width="2.2" height="6.4" fill="#0a900a"/><path d="M382.48 251.6V258.0" stroke="#5cff5c" stroke-width="1"/><path d="M384.42 236.0V252.0" stroke="#00a800" stroke-width="1"/><rect x="383.32" y="241.8" width="2.2" height="9.2" fill="#0a900a"/><path d="M384.42 241.8V251.0" stroke="#5cff5c" stroke-width="1"/><path d="M386.36 233.4V243.9" stroke="#00a800" stroke-width="1"/><rect x="385.26" y="238.1" width="2.2" height="3.7" fill="#0a900a"/><path d="M386.36 238.1V241.8" stroke="#5cff5c" stroke-width="1"/><path d="M388.30 232.0V245.0" stroke="#00a800" stroke-width="1"/><rect x="387.20" y="238.1" width="2.2" height="3.5" fill="#0a900a"/><path d="M388.30 238.1V241.6" stroke="#33e033" stroke-width="1"/><path d="M390.24 221.7V238.5" stroke="#00a800" stroke-width="1"/><rect x="389.14" y="227.1" width="2.2" height="10.4" fill="#0a900a"/><path d="M390.24 227.1V237.5" stroke="#5cff5c" stroke-width="1"/><path d="M392.18 227.0V236.0" stroke="#00a800" stroke-width="1"/><rect x="391.08" y="228.0" width="2.2" height="5.2" fill="#0a900a"/><path d="M392.18 228.0V233.2" stroke="#33e033" stroke-width="1"/><path d="M394.12 221.6V233.8" stroke="#00a800" stroke-width="1"/><rect x="393.02" y="225.6" width="2.2" height="7.4" fill="#0a900a"/><path d="M394.12 225.6V233.0" stroke="#5cff5c" stroke-width="1"/><path d="M396.06 220.5V234.0" stroke="#00a800" stroke-width="1"/><rect x="394.96" y="225.6" width="2.2" height="3.7" fill="#0a900a"/><path d="M396.06 225.6V229.3" stroke="#33e033" stroke-width="1"/><path d="M398.00 214.0V227.0" stroke="#00a800" stroke-width="1"/><rect x="396.90" y="225.2" width="2.2" height="1.0" fill="#0a900a"/><path d="M398.00 225.2V226.2" stroke="#5cff5c" stroke-width="1"/><path d="M399.94 209.0V223.0" stroke="#00a800" stroke-width="1"/><rect x="398.84" y="216.3" width="2.2" height="5.7" fill="#0a900a"/><path d="M399.94 216.3V222.0" stroke="#5cff5c" stroke-width="1"/><path d="M401.88 209.7V222.0" stroke="#00a800" stroke-width="1"/><rect x="400.78" y="212.3" width="2.2" height="4.1" fill="#0a900a"/><path d="M401.88 212.3V216.3" stroke="#5cff5c" stroke-width="1"/><path d="M403.82 211.2V216.1" stroke="#00a800" stroke-width="1"/><rect x="402.72" y="211.9" width="2.2" height="1.0" fill="#0a900a"/><path d="M403.82 211.9V212.9" stroke="#5cff5c" stroke-width="1"/><path d="M405.76 209.0V218.0" stroke="#00a800" stroke-width="1"/><rect x="404.66" y="211.9" width="2.2" height="1.0" fill="#0a900a"/><path d="M405.76 211.9V212.9" stroke="#33e033" stroke-width="1"/><path d="M407.70 206.3V213.8" stroke="#00a800" stroke-width="1"/><rect x="406.60" y="208.1" width="2.2" height="4.8" fill="#0a900a"/><path d="M407.70 208.1V212.9" stroke="#5cff5c" stroke-width="1"/><path d="M409.64 205.0V214.0" stroke="#00a800" stroke-width="1"/><rect x="408.54" y="207.8" width="2.2" height="1.0" fill="#0a900a"/><path d="M409.64 207.8V208.8" stroke="#5cff5c" stroke-width="1"/><path d="M411.58 191.0V220.5" stroke="#00a800" stroke-width="1"/><rect x="410.48" y="198.6" width="2.2" height="9.3" fill="#0a900a"/><path d="M411.58 198.6V207.8" stroke="#5cff5c" stroke-width="1"/><path d="M413.52 200.7V220.5" stroke="#00a800" stroke-width="1"/><rect x="412.42" y="201.0" width="2.2" height="12.8" fill="#0a900a"/><path d="M413.52 201.0V213.8" stroke="#33e033" stroke-width="1"/><path d="M415.46 200.0V223.0" stroke="#00a800" stroke-width="1"/><rect x="414.36" y="205.6" width="2.2" height="8.2" fill="#0a900a"/><path d="M415.46 205.6V213.8" stroke="#5cff5c" stroke-width="1"/><path d="M417.40 211.5V227.0" stroke="#00a800" stroke-width="1"/><rect x="416.30" y="212.5" width="2.2" height="12.8" fill="#0a900a"/><path d="M417.40 212.5V225.3" stroke="#33e033" stroke-width="1"/><path d="M419.34 216.0V229.5" stroke="#00a800" stroke-width="1"/><rect x="418.24" y="219.1" width="2.2" height="6.1" fill="#0a900a"/><path d="M419.34 219.1V225.3" stroke="#5cff5c" stroke-width="1"/><path d="M421.28 209.0V220.5" stroke="#00a800" stroke-width="1"/><rect x="420.18" y="211.2" width="2.2" height="8.0" fill="#0a900a"/><path d="M421.28 211.2V219.1" stroke="#5cff5c" stroke-width="1"/><path d="M423.22 210.0V219.9" stroke="#00a800" stroke-width="1"/><rect x="422.12" y="211.2" width="2.2" height="7.9" fill="#0a900a"/><path d="M423.22 211.2V219.1" stroke="#33e033" stroke-width="1"/><path d="M425.16 200.0V227.0" stroke="#00a800" stroke-width="1"/><rect x="424.06" y="212.8" width="2.2" height="6.3" fill="#0a900a"/><path d="M425.16 212.8V219.1" stroke="#5cff5c" stroke-width="1"/><path d="M427.10 187.0V209.0" stroke="#00a800" stroke-width="1"/><rect x="426.00" y="200.9" width="2.2" height="7.1" fill="#0a900a"/><path d="M427.10 200.9V208.0" stroke="#5cff5c" stroke-width="1"/><path d="M429.04 184.0V206.0" stroke="#00a800" stroke-width="1"/><rect x="427.94" y="196.6" width="2.2" height="4.3" fill="#0a900a"/><path d="M429.04 196.6V200.9" stroke="#5cff5c" stroke-width="1"/><path d="M430.98 168.0V193.0" stroke="#00a800" stroke-width="1"/><rect x="429.88" y="184.9" width="2.2" height="7.1" fill="#0a900a"/><path d="M430.98 184.9V192.0" stroke="#5cff5c" stroke-width="1"/><path d="M432.92 181.5V197.0" stroke="#00a800" stroke-width="1"/><rect x="431.82" y="183.1" width="2.2" height="1.8" fill="#0a900a"/><path d="M432.92 183.1V184.9" stroke="#5cff5c" stroke-width="1"/><path d="M434.86 181.8V190.3" stroke="#00a800" stroke-width="1"/><rect x="433.76" y="183.1" width="2.2" height="6.2" fill="#0a900a"/><path d="M434.86 183.1V189.3" stroke="#33e033" stroke-width="1"/><path d="M436.80 181.5V190.5" stroke="#00a800" stroke-width="1"/><rect x="435.70" y="187.4" width="2.2" height="1.9" fill="#0a900a"/><path d="M436.80 187.4V189.3" stroke="#5cff5c" stroke-width="1"/><path d="M438.74 179.7V187.4" stroke="#00a800" stroke-width="1"/><rect x="437.64" y="186.3" width="2.2" height="1.0" fill="#0a900a"/><path d="M438.74 186.3V187.3" stroke="#5cff5c" stroke-width="1"/><path d="M440.68 175.0V188.0" stroke="#00a800" stroke-width="1"/><rect x="439.58" y="179.4" width="2.2" height="7.0" fill="#0a900a"/><path d="M440.68 179.4V186.3" stroke="#5cff5c" stroke-width="1"/><path d="M442.62 175.6V180.6" stroke="#00a800" stroke-width="1"/><rect x="441.52" y="179.4" width="2.2" height="1.0" fill="#0a900a"/><path d="M442.62 179.4V180.4" stroke="#33e033" stroke-width="1"/><path d="M444.56 170.0V181.5" stroke="#00a800" stroke-width="1"/><rect x="443.46" y="172.3" width="2.2" height="7.6" fill="#0a900a"/><path d="M444.56 172.3V179.9" stroke="#5cff5c" stroke-width="1"/><path d="M446.50 164.6V193.0" stroke="#00a800" stroke-width="1"/><rect x="445.40" y="172.3" width="2.2" height="13.6" fill="#0a900a"/><path d="M446.50 172.3V185.9" stroke="#33e033" stroke-width="1"/><path d="M448.44 188.7V193.0" stroke="#00a800" stroke-width="1"/><rect x="447.34" y="189.0" width="2.2" height="2.3" fill="#0a900a"/><path d="M448.44 189.0V191.3" stroke="#33e033" stroke-width="1"/><path d="M450.38 188.0V195.0" stroke="#00a800" stroke-width="1"/><rect x="449.28" y="191.3" width="2.2" height="1.0" fill="#0a900a"/><path d="M450.38 191.3V192.3" stroke="#33e033" stroke-width="1"/><path d="M452.32 188.0V197.0" stroke="#00a800" stroke-width="1"/><rect x="451.22" y="191.4" width="2.2" height="4.5" fill="#0a900a"/><path d="M452.32 191.4V195.9" stroke="#33e033" stroke-width="1"/><path d="M454.26 190.9V196.8" stroke="#00a800" stroke-width="1"/><rect x="453.16" y="193.3" width="2.2" height="2.6" fill="#0a900a"/><path d="M454.26 193.3V195.9" stroke="#5cff5c" stroke-width="1"/><path d="M456.20 179.0V195.0" stroke="#00a800" stroke-width="1"/><rect x="455.10" y="185.5" width="2.2" height="7.8" fill="#0a900a"/><path d="M456.20 185.5V193.3" stroke="#5cff5c" stroke-width="1"/><path d="M458.14 179.9V191.0" stroke="#00a800" stroke-width="1"/><rect x="457.04" y="184.8" width="2.2" height="1.0" fill="#0a900a"/><path d="M458.14 184.8V185.8" stroke="#5cff5c" stroke-width="1"/><path d="M460.08 161.0V184.0" stroke="#00a800" stroke-width="1"/><rect x="458.98" y="174.9" width="2.2" height="8.1" fill="#0a900a"/><path d="M460.08 174.9V183.0" stroke="#5cff5c" stroke-width="1"/><path d="M462.02 160.4V180.9" stroke="#00a800" stroke-width="1"/><rect x="460.92" y="171.0" width="2.2" height="3.9" fill="#0a900a"/><path d="M462.02 171.0V174.9" stroke="#5cff5c" stroke-width="1"/><path d="M463.96 159.0V186.0" stroke="#00a800" stroke-width="1"/><rect x="462.86" y="171.0" width="2.2" height="1.1" fill="#0a900a"/><path d="M463.96 171.0V172.1" stroke="#33e033" stroke-width="1"/><path d="M465.90 179.0V213.0" stroke="#00a800" stroke-width="1"/><rect x="464.80" y="180.0" width="2.2" height="12.8" fill="#0a900a"/><path d="M465.90 180.0V192.8" stroke="#33e033" stroke-width="1"/><path d="M467.84 199.5V217.5" stroke="#00a800" stroke-width="1"/><rect x="466.74" y="200.5" width="2.2" height="9.4" fill="#0a900a"/><path d="M467.84 200.5V209.9" stroke="#33e033" stroke-width="1"/><path d="M469.78 200.1V214.1" stroke="#00a800" stroke-width="1"/><rect x="468.68" y="205.0" width="2.2" height="4.8" fill="#0a900a"/><path d="M469.78 205.0V209.9" stroke="#5cff5c" stroke-width="1"/><path d="M471.72 173.3V212.1" stroke="#00a800" stroke-width="1"/><rect x="470.62" y="178.2" width="2.2" height="26.8" fill="#0a900a"/><path d="M471.72 178.2V205.0" stroke="#5cff5c" stroke-width="1"/><path d="M473.66 172.5V222.0" stroke="#00a800" stroke-width="1"/><rect x="472.56" y="178.2" width="2.2" height="36.0" fill="#0a900a"/><path d="M473.66 178.2V214.3" stroke="#33e033" stroke-width="1"/><path d="M475.60 186.0V215.0" stroke="#00a800" stroke-width="1"/><rect x="474.50" y="200.0" width="2.2" height="14.0" fill="#0a900a"/><path d="M475.60 200.0V214.0" stroke="#5cff5c" stroke-width="1"/><path d="M477.54 193.0V204.0" stroke="#00a800" stroke-width="1"/><rect x="476.44" y="199.9" width="2.2" height="1.0" fill="#0a900a"/><path d="M477.54 199.9V200.9" stroke="#5cff5c" stroke-width="1"/><path d="M479.48 197.3V202.9" stroke="#00a800" stroke-width="1"/><rect x="478.38" y="199.9" width="2.2" height="2.6" fill="#0a900a"/><path d="M479.48 199.9V202.6" stroke="#33e033" stroke-width="1"/><path d="M481.42 186.0V208.6" stroke="#00a800" stroke-width="1"/><rect x="480.32" y="202.6" width="2.2" height="1.0" fill="#0a900a"/><path d="M481.42 202.6V203.6" stroke="#33e033" stroke-width="1"/><path d="M483.36 188.0V206.0" stroke="#00a800" stroke-width="1"/><rect x="482.26" y="196.7" width="2.2" height="6.5" fill="#0a900a"/><path d="M483.36 196.7V203.2" stroke="#5cff5c" stroke-width="1"/><path d="M485.30 193.5V202.2" stroke="#00a800" stroke-width="1"/><rect x="484.20" y="196.7" width="2.2" height="1.2" fill="#0a900a"/><path d="M485.30 196.7V197.9" stroke="#33e033" stroke-width="1"/><path d="M487.24 195.0V211.0" stroke="#00a800" stroke-width="1"/><rect x="486.14" y="197.9" width="2.2" height="1.9" fill="#0a900a"/><path d="M487.24 197.9V199.7" stroke="#33e033" stroke-width="1"/><path d="M489.18 197.8V216.9" stroke="#00a800" stroke-width="1"/><rect x="488.08" y="199.7" width="2.2" height="15.1" fill="#0a900a"/><path d="M489.18 199.7V214.8" stroke="#33e033" stroke-width="1"/><path d="M491.12 197.0V220.0" stroke="#00a800" stroke-width="1"/><rect x="490.02" y="208.4" width="2.2" height="6.5" fill="#0a900a"/><path d="M491.12 208.4V214.8" stroke="#5cff5c" stroke-width="1"/><path d="M493.06 208.7V222.6" stroke="#00a800" stroke-width="1"/><rect x="491.96" y="209.5" width="2.2" height="7.0" fill="#0a900a"/><path d="M493.06 209.5V216.5" stroke="#33e033" stroke-width="1"/><path d="M495.00 208.5V224.0" stroke="#00a800" stroke-width="1"/><rect x="493.90" y="216.5" width="2.2" height="4.7" fill="#0a900a"/><path d="M495.00 216.5V221.1" stroke="#33e033" stroke-width="1"/><path d="M496.94 213.0V231.0" stroke="#00a800" stroke-width="1"/><rect x="495.84" y="221.1" width="2.2" height="4.6" fill="#0a900a"/><path d="M496.94 221.1V225.7" stroke="#33e033" stroke-width="1"/><path d="M498.88 215.6V228.0" stroke="#00a800" stroke-width="1"/><rect x="497.78" y="219.1" width="2.2" height="6.6" fill="#0a900a"/><path d="M498.88 219.1V225.7" stroke="#5cff5c" stroke-width="1"/><path d="M500.82 206.0V217.5" stroke="#00a800" stroke-width="1"/><rect x="499.72" y="213.9" width="2.2" height="2.6" fill="#0a900a"/><path d="M500.82 213.9V216.5" stroke="#5cff5c" stroke-width="1"/><path d="M502.76 193.0V217.5" stroke="#00a800" stroke-width="1"/><rect x="501.66" y="204.6" width="2.2" height="9.3" fill="#0a900a"/><path d="M502.76 204.6V213.9" stroke="#5cff5c" stroke-width="1"/><path d="M504.70 195.7V212.5" stroke="#00a800" stroke-width="1"/><rect x="503.60" y="202.5" width="2.2" height="2.0" fill="#0a900a"/><path d="M504.70 202.5V204.6" stroke="#5cff5c" stroke-width="1"/><path d="M506.64 165.8V211.0" stroke="#00a800" stroke-width="1"/><rect x="505.54" y="170.4" width="2.2" height="32.1" fill="#0a900a"/><path d="M506.64 170.4V202.5" stroke="#5cff5c" stroke-width="1"/><path d="M508.58 169.1V181.8" stroke="#00a800" stroke-width="1"/><rect x="507.48" y="170.4" width="2.2" height="7.1" fill="#0a900a"/><path d="M508.58 170.4V177.5" stroke="#33e033" stroke-width="1"/><path d="M510.52 165.8V183.8" stroke="#00a800" stroke-width="1"/><rect x="509.42" y="170.4" width="2.2" height="7.1" fill="#0a900a"/><path d="M510.52 170.4V177.5" stroke="#5cff5c" stroke-width="1"/><path d="M512.46 156.8V190.5" stroke="#00a800" stroke-width="1"/><rect x="511.36" y="170.4" width="2.2" height="10.8" fill="#0a900a"/><path d="M512.46 170.4V181.2" stroke="#33e033" stroke-width="1"/><path d="M514.40 163.5V183.8" stroke="#00a800" stroke-width="1"/><rect x="513.30" y="175.2" width="2.2" height="6.0" fill="#0a900a"/><path d="M514.40 175.2V181.2" stroke="#5cff5c" stroke-width="1"/><path d="M516.34 173.1V188.3" stroke="#00a800" stroke-width="1"/><rect x="515.24" y="175.2" width="2.2" height="11.1" fill="#0a900a"/><path d="M516.34 175.2V186.3" stroke="#33e033" stroke-width="1"/><path d="M518.28 172.5V190.0" stroke="#00a800" stroke-width="1"/><rect x="517.18" y="183.8" width="2.2" height="2.5" fill="#0a900a"/><path d="M518.28 183.8V186.3" stroke="#5cff5c" stroke-width="1"/><path d="M520.22 157.5V190.0" stroke="#00a800" stroke-width="1"/><rect x="519.12" y="183.8" width="2.2" height="1.0" fill="#0a900a"/><path d="M520.22 183.8V184.8" stroke="#33e033" stroke-width="1"/><path d="M522.16 180.0V185.0" stroke="#00a800" stroke-width="1"/><rect x="521.06" y="183.8" width="2.2" height="1.0" fill="#0a900a"/><path d="M522.16 183.8V184.8" stroke="#5cff5c" stroke-width="1"/><path d="M524.10 177.5V192.5" stroke="#00a800" stroke-width="1"/><rect x="523.00" y="182.6" width="2.2" height="1.2" fill="#0a900a"/><path d="M524.10 182.6V183.8" stroke="#5cff5c" stroke-width="1"/><path d="M526.04 177.9V188.6" stroke="#00a800" stroke-width="1"/><rect x="524.94" y="179.0" width="2.2" height="3.6" fill="#0a900a"/><path d="M526.04 179.0V182.6" stroke="#5cff5c" stroke-width="1"/><path d="M527.98 175.7V183.1" stroke="#00a800" stroke-width="1"/><rect x="526.88" y="179.0" width="2.2" height="3.2" fill="#0a900a"/><path d="M527.98 179.0V182.2" stroke="#33e033" stroke-width="1"/><path d="M529.92 177.0V183.8" stroke="#00a800" stroke-width="1"/><rect x="528.82" y="179.8" width="2.2" height="2.4" fill="#0a900a"/><path d="M529.92 179.8V182.2" stroke="#5cff5c" stroke-width="1"/><path d="M531.86 175.0V185.0" stroke="#00a800" stroke-width="1"/><rect x="530.76" y="178.6" width="2.2" height="1.2" fill="#0a900a"/><path d="M531.86 178.6V179.8" stroke="#5cff5c" stroke-width="1"/><path d="M533.80 185.0V197.5" stroke="#00a800" stroke-width="1"/><rect x="532.70" y="186.0" width="2.2" height="4.5" fill="#0a900a"/><path d="M533.80 186.0V190.5" stroke="#33e033" stroke-width="1"/><path d="M535.74 187.5V200.0" stroke="#00a800" stroke-width="1"/><rect x="534.64" y="189.4" width="2.2" height="1.1" fill="#0a900a"/><path d="M535.74 189.4V190.5" stroke="#5cff5c" stroke-width="1"/><path d="M537.68 197.5V217.5" stroke="#00a800" stroke-width="1"/><rect x="536.58" y="198.5" width="2.2" height="5.3" fill="#0a900a"/><path d="M537.68 198.5V203.8" stroke="#33e033" stroke-width="1"/><path d="M539.62 200.0V215.6" stroke="#00a800" stroke-width="1"/><rect x="538.52" y="200.9" width="2.2" height="2.9" fill="#0a900a"/><path d="M539.62 200.9V203.8" stroke="#5cff5c" stroke-width="1"/><path d="M541.56 212.5V244.0" stroke="#00a800" stroke-width="1"/><rect x="540.46" y="213.5" width="2.2" height="20.4" fill="#0a900a"/><path d="M541.56 213.5V233.9" stroke="#33e033" stroke-width="1"/><path d="M543.50 220.0V235.0" stroke="#00a800" stroke-width="1"/><rect x="542.40" y="233.5" width="2.2" height="1.0" fill="#0a900a"/><path d="M543.50 233.5V234.5" stroke="#5cff5c" stroke-width="1"/><path d="M545.44 227.6V234.7" stroke="#00a800" stroke-width="1"/><rect x="544.34" y="229.9" width="2.2" height="3.6" fill="#0a900a"/><path d="M545.44 229.9V233.5" stroke="#5cff5c" stroke-width="1"/><path d="M547.38 212.5V225.0" stroke="#00a800" stroke-width="1"/><rect x="546.28" y="219.9" width="2.2" height="4.1" fill="#0a900a"/><path d="M547.38 219.9V224.0" stroke="#5cff5c" stroke-width="1"/><path d="M549.32 200.0V217.5" stroke="#00a800" stroke-width="1"/><rect x="548.22" y="211.7" width="2.2" height="4.8" fill="#0a900a"/><path d="M549.32 211.7V216.5" stroke="#5cff5c" stroke-width="1"/><path d="M551.26 150.0V210.0" stroke="#00a800" stroke-width="1"/><rect x="550.16" y="203.7" width="2.2" height="5.3" fill="#0a900a"/><path d="M551.26 203.7V209.0" stroke="#5cff5c" stroke-width="1"/><path d="M553.20 112.0V192.0" stroke="#00a800" stroke-width="1"/><rect x="552.10" y="129.6" width="2.2" height="61.4" fill="#0a900a"/><path d="M553.20 129.6V191.0" stroke="#5cff5c" stroke-width="1"/><path d="M555.14 76.0V115.0" stroke="#00a800" stroke-width="1"/><rect x="554.04" y="92.8" width="2.2" height="21.2" fill="#0a900a"/><path d="M555.14 92.8V114.0" stroke="#5cff5c" stroke-width="1"/><path d="M557.08 75.0V95.0" stroke="#00a800" stroke-width="1"/><rect x="555.98" y="78.1" width="2.2" height="14.7" fill="#0a900a"/><path d="M557.08 78.1V92.8" stroke="#5cff5c" stroke-width="1"/><path d="M559.02 76.3V90.1" stroke="#00a800" stroke-width="1"/><rect x="557.92" y="78.1" width="2.2" height="2.3" fill="#0a900a"/><path d="M559.02 78.1V80.4" stroke="#33e033" stroke-width="1"/><path d="M560.96 77.0V115.0" stroke="#00a800" stroke-width="1"/><rect x="559.86" y="80.4" width="2.2" height="8.9" fill="#0a900a"/><path d="M560.96 80.4V89.3" stroke="#33e033" stroke-width="1"/><path d="M562.90 85.8V106.2" stroke="#00a800" stroke-width="1"/><rect x="561.80" y="89.3" width="2.2" height="8.9" fill="#0a900a"/><path d="M562.90 89.3V98.2" stroke="#33e033" stroke-width="1"/><path d="M564.84 85.0V120.0" stroke="#00a800" stroke-width="1"/><rect x="563.74" y="88.8" width="2.2" height="9.4" fill="#0a900a"/><path d="M564.84 88.8V98.2" stroke="#5cff5c" stroke-width="1"/><path d="M566.78 82.0V100.0" stroke="#00a800" stroke-width="1"/><rect x="565.68" y="88.3" width="2.2" height="1.0" fill="#0a900a"/><path d="M566.78 88.3V89.3" stroke="#5cff5c" stroke-width="1"/><path d="M568.72 84.9V98.9" stroke="#00a800" stroke-width="1"/><rect x="567.62" y="88.3" width="2.2" height="4.1" fill="#0a900a"/><path d="M568.72 88.3V92.4" stroke="#33e033" stroke-width="1"/><path d="M570.66 80.0V90.0" stroke="#00a800" stroke-width="1"/><rect x="569.56" y="88.3" width="2.2" height="1.0" fill="#0a900a"/><path d="M570.66 88.3V89.3" stroke="#5cff5c" stroke-width="1"/><path d="M572.60 77.0V87.0" stroke="#00a800" stroke-width="1"/><rect x="571.50" y="83.6" width="2.2" height="2.4" fill="#0a900a"/><path d="M572.60 83.6V86.0" stroke="#5cff5c" stroke-width="1"/><path d="M574.54 77.8V85.5" stroke="#00a800" stroke-width="1"/><rect x="573.44" y="79.2" width="2.2" height="4.4" fill="#0a900a"/><path d="M574.54 79.2V83.6" stroke="#5cff5c" stroke-width="1"/><path d="M576.48 81.0V87.0" stroke="#00a800" stroke-width="1"/><rect x="575.38" y="82.0" width="2.2" height="1.0" fill="#0a900a"/><path d="M576.48 82.0V83.0" stroke="#33e033" stroke-width="1"/><path d="M578.42 82.2V86.2" stroke="#00a800" stroke-width="1"/><rect x="577.32" y="82.9" width="2.2" height="1.4" fill="#0a900a"/><path d="M578.42 82.9V84.2" stroke="#33e033" stroke-width="1"/><path d="M559.5 65V80" stroke="#00c000" stroke-width="1"/><path d="M553.3 198V80" stroke="#2ee82e" stroke-width="1.3"/><rect x="555.5" y="78" width="6.5" height="17" fill="#0c4a0c" stroke="#2ee82e" stroke-width="1"/><path d="M558.7 78V95" stroke="#1a9a1a" stroke-width="1"/></svg><svg style="left:244px;top:60px" width="7" height="9" viewBox="0 0 7 9"><rect x="0.3" y="0.3" width="6.4" height="8.4" fill="#f4f4ff"/><rect x="0.8" y="2.5" width="2" height="6" fill="#f39a9a"/><rect x="3.8" y="2.5" width="2" height="6" fill="#9aa6f3"/><rect x="0.3" y="0.3" width="6.4" height="2" fill="#a8b6ff"/></svg><svg style="left:252px;top:60.5px" width="7" height="8" viewBox="0 0 7 8"><rect x="0" y="0" width="3.5" height="8" fill="#2a3be0"/><rect x="3.5" y="0" width="3.5" height="8" fill="#e0321e"/><circle cx="3.5" cy="2" r="1.4" fill="#bbb"/></svg><span class="t" style="left:262px;top:61px;font-size:7.8px;color:#f0f0f0;transform:scaleX(0.59);">EURUSD, H1:&nbsp; Euro vs US Dollar</span><div class="b" style="left:240px;top:389px;width:360px;height:11px;background:#f0f0f0"></div><div class="b" style="left:240px;top:389px;width:360px;height:1px;background:#9a9a9a"></div><div class="b" style="left:240px;top:390px;width:360px;height:1px;background:#fbfbfb"></div><div class="b" style="left:240px;top:391.5px;width:46.5px;height:8.5px;background:#f6f6f6;border:1px solid #c8c8c8;border-bottom:none"></div><span class="t" style="left:247px;top:393.5px;font-size:8.4px;color:#7a8696;transform:scaleX(0.66);">USDJPYm M1</span><span class="t" style="left:293px;top:393.5px;font-size:8.4px;color:#7a8696;transform:scaleX(0.66);">USDCHFm M1</span><span class="t" style="left:341px;top:393.5px;font-size:8.4px;color:#7a8696;transform:scaleX(0.66);">US30m M1</span><span class="t" style="left:380px;top:393.5px;font-size:8.4px;color:#7a8696;transform:scaleX(0.66);">EURJPYm M15</span><span class="t" style="left:428px;top:393.5px;font-size:8.4px;color:#7a8696;transform:scaleX(0.66);">XAUUSDm H1</span><span class="t" style="left:476px;top:393.5px;font-size:8.4px;color:#7a8696;transform:scaleX(0.66);">USDCADm M1</span><span class="t" style="left:525px;top:393.5px;font-size:8.4px;color:#7a8696;transform:scaleX(0.66);">GBPUSDm M1</span><span class="t" style="left:571px;top:393.5px;font-size:8.4px;color:#7a8696;transform:scaleX(0.66);">EUR</span><div class="b" style="left:335px;top:392.5px;width:0.9px;height:7.5px;background:#a0a0a0"></div><div class="b" style="left:374.3px;top:392.5px;width:0.9px;height:7.5px;background:#a0a0a0"></div><div class="b" style="left:422.7px;top:392.5px;width:0.9px;height:7.5px;background:#a0a0a0"></div><div class="b" style="left:470.5px;top:392.5px;width:0.9px;height:7.5px;background:#a0a0a0"></div><div class="b" style="left:520px;top:392.5px;width:0.9px;height:7.5px;background:#a0a0a0"></div><div class="b" style="left:566.7px;top:392.5px;width:0.9px;height:7.5px;background:#a0a0a0"></div><svg style="left:587.5px;top:394.5px" width="3" height="4" viewBox="0 0 3 4"><path d="M2.5 0v4L0 2z" fill="#999"/></svg><svg style="left:597px;top:394.5px" width="3" height="4" viewBox="0 0 3 4"><path d="M0 0v4l2.5-2z" fill="#555"/></svg><div class="b" style="left:24px;top:11px;width:101px;height:226.6px;background:#f0f0f0;border:1px solid #b0b0b0;border-left-color:#c4c4c4;border-top-color:#c4c4c4;box-shadow:1px 1px 0 #8e8e8e,2px 2px 2px rgba(0,0,0,.28)"></div><span class="t" style="left:38.6px;top:17.3px;font-size:8.6px;color:#1e1e1e;transform:scaleX(0.66);">Languages</span><svg style="left:117px;top:18.0px" width="3" height="4" viewBox="0 0 3 4"><path d="M0.3 0l2.5 2-2.5 2z" fill="#111"/></svg><div class="b" style="left:26px;top:30.0px;width:97px;height:1px;background:#cdcdcd"></div><span class="t" style="left:38.6px;top:38.5px;font-size:8.6px;color:#1e1e1e;transform:scaleX(0.66);">Toolbars</span><svg style="left:117px;top:39.2px" width="3" height="4" viewBox="0 0 3 4"><path d="M0.3 0l2.5 2-2.5 2z" fill="#111"/></svg><span class="t" style="left:38.6px;top:54.0px;font-size:8.6px;color:#1e1e1e;transform:scaleX(0.66);">Status Bar</span><svg style="left:30px;top:55.5px" width="6" height="6" viewBox="0 0 6 6"><path d="M0.6 2.8l1.6 1.8L5 0.6" stroke="#111" stroke-width="1.4" fill="none"/></svg><span class="t" style="left:38.6px;top:69.1px;font-size:8.6px;color:#1e1e1e;transform:scaleX(0.66);">Charts Bar</span><svg style="left:30px;top:70.6px" width="6" height="6" viewBox="0 0 6 6"><path d="M0.6 2.8l1.6 1.8L5 0.6" stroke="#111" stroke-width="1.4" fill="none"/></svg><div class="b" style="left:26px;top:81.9px;width:97px;height:1px;background:#cdcdcd"></div><span class="t" style="left:38.6px;top:90.8px;font-size:8.6px;color:#1e1e1e;transform:scaleX(0.66);">Symbols</span><span class="t r" style="right:478.5px;top:90.8px;font-size:8.6px;color:#1e1e1e;transform:scaleX(0.72);">Ctrl+U</span><svg style="left:27px;top:87.8px" width="9" height="12" viewBox="0 0 9 12"><circle cx="5" cy="4" r="3.3" fill="#3d8fe0"/><path d="M2.5 2.5q2-2 4.5 0.5" stroke="#4cc04c" stroke-width="1.6" fill="none"/><rect x="0.5" y="5.5" width="5.5" height="5.5" rx="0.8" fill="#e9c03a" stroke="#b98f1a" stroke-width="0.6"/><circle cx="3.2" cy="8" r="0.8" fill="#7a5a10"/></svg><span class="t" style="left:38.6px;top:105.3px;font-size:8.6px;color:#1e1e1e;transform:scaleX(0.66);">Depth Of Market</span><svg style="left:117px;top:106.0px" width="3" height="4" viewBox="0 0 3 4"><path d="M0.3 0l2.5 2-2.5 2z" fill="#111"/></svg><div class="b" style="left:26px;top:119.2px;width:97px;height:1px;background:#cdcdcd"></div><div class="b" style="left:25px;top:123.2px;width:98px;height:14.8px;background:#0078d7"></div><span class="t" style="left:38.6px;top:127.1px;font-size:8.6px;color:#fff;transform:scaleX(0.66);">Market Watch</span><span class="t r" style="right:478.5px;top:127.1px;font-size:8.6px;color:#fff;transform:scaleX(0.72);">Ctrl+M</span><svg style="left:28px;top:125.8px" width="8" height="10" viewBox="0 0 8 10"><rect x="0.3" y="0.3" width="7.4" height="9.2" fill="#f6f6f6" stroke="#b9c9e0" stroke-width="0.6"/><rect x="0.3" y="0.3" width="7.4" height="1.5" fill="#9fb8dc"/><path d="M1.2 4.5l1.8-1.8 1.8 1.8zM2.2 5.5h1.6v2h-1.6z" fill="#2bb52b"/><path d="M3.5 5.5l1.8 1.8 1.8-1.8zM4.6 3h1.6v2.5h-1.6z" fill="#e03030"/></svg><span class="t" style="left:38.6px;top:142.3px;font-size:8.6px;color:#1e1e1e;transform:scaleX(0.66);">Data Window</span><span class="t r" style="right:478.5px;top:142.3px;font-size:8.6px;color:#1e1e1e;transform:scaleX(0.72);">Ctrl+D</span><svg style="left:29px;top:140.8px" width="7" height="11" viewBox="0 0 7 11"><path d="M3.5 0.5v10M1 6h2M4 3h2" stroke="#3a78d4" stroke-width="0.9"/><circle cx="3.5" cy="5" r="1" fill="#3a78d4"/></svg><span class="t" style="left:38.6px;top:157.5px;font-size:8.6px;color:#1e1e1e;transform:scaleX(0.66);">Navigator</span><span class="t r" style="right:478.5px;top:157.5px;font-size:8.6px;color:#1e1e1e;transform:scaleX(0.72);">Ctrl+N</span><svg style="left:28px;top:157px" width="8" height="9" viewBox="0 0 8 9"><path d="M0.5 1.5h3l1 1h3v5.5h-7z" fill="#f2c84b" stroke="#c9a235" stroke-width="0.5"/></svg><span class="t" style="left:38.6px;top:172.7px;font-size:8.6px;color:#1e1e1e;transform:scaleX(0.66);">Toolbox</span><span class="t r" style="right:478.5px;top:172.7px;font-size:8.6px;color:#1e1e1e;transform:scaleX(0.72);">Ctrl+T</span><svg style="left:26.5px;top:170.2px" width="10" height="12" viewBox="0 0 10 12"><rect x="0.5" y="0.5" width="9" height="11" fill="#c9dcf3" stroke="#8fb0dc" stroke-width="0.8"/><rect x="1.8" y="2" width="6.4" height="3" fill="#fff"/><rect x="1.8" y="6.5" width="6.4" height="3.5" fill="#fff"/></svg><span class="t" style="left:38.6px;top:188.2px;font-size:8.6px;color:#1e1e1e;transform:scaleX(0.66);">Strategy Tester</span><span class="t r" style="right:478.5px;top:188.2px;font-size:8.6px;color:#1e1e1e;transform:scaleX(0.72);">Ctrl+R</span><svg style="left:27.5px;top:185.7px" width="8" height="12" viewBox="0 0 8 12"><rect x="0.3" y="0.3" width="7.4" height="11" fill="#6f9fdc"/><rect x="1" y="1.5" width="6" height="6" fill="#173a23"/><path d="M1.5 6.5l1.5-2 1.5 1 2-2.5" stroke="#5fe05f" stroke-width="1" fill="none"/><rect x="1" y="8.5" width="6" height="2" fill="#dfeafa"/></svg><span class="t" style="left:38.6px;top:203.5px;font-size:8.6px;color:#1e1e1e;transform:scaleX(0.66);">Chats</span><span class="t r" style="right:478.5px;top:203.5px;font-size:8.6px;color:#1e1e1e;transform:scaleX(0.72);">Alt+M</span><svg style="left:27.5px;top:200.5px" width="9" height="13" viewBox="0 0 9 13"><path d="M4.5 0.8a4 4 0 1 1 -1.5 7.6l-2.3 3.6 0.6-4.4a4 4 0 0 1 3.2-6.8z" fill="#7fb6ea" stroke="#3a86d4" stroke-width="0.7"/><circle cx="5" cy="4" r="1.3" fill="#fff"/><path d="M3 7q2-2 4 0" stroke="#fff" stroke-width="0.9" fill="none"/></svg><div class="b" style="left:26px;top:216.5px;width:97px;height:1px;background:#cdcdcd"></div><span class="t" style="left:38.6px;top:225.0px;font-size:8.6px;color:#1e1e1e;transform:scaleX(0.66);">Fullscreen</span><span class="t r" style="right:478.5px;top:225.0px;font-size:8.6px;color:#1e1e1e;transform:scaleX(0.72);">F11</span><svg style="left:27px;top:224.5px" width="10" height="10" viewBox="0 0 10 10"><rect x="0.4" y="0.4" width="8.6" height="8.8" rx="0.6" fill="#b3d3f6" stroke="#6aa3e3" stroke-width="0.8"/><path d="M4.7 1.5v6.6M1.5 4.8h6.4" stroke="#fff" stroke-width="1"/><path d="M1.5 1.5l2 2M7.9 1.5l-2 2M1.5 8.1l2-2M7.9 8.1l-2-2" stroke="#2f6fd0" stroke-width="1.3"/></svg><svg style="left:108px;top:134px" width="8" height="11" viewBox="0 0 8 11"><path d="M0.5 0.5v8.5l2-2 1.5 3.2 1.2-0.6-1.5-3h2.8z" fill="#fff" stroke="#222" stroke-width="0.7"/></svg>
</body></html>
